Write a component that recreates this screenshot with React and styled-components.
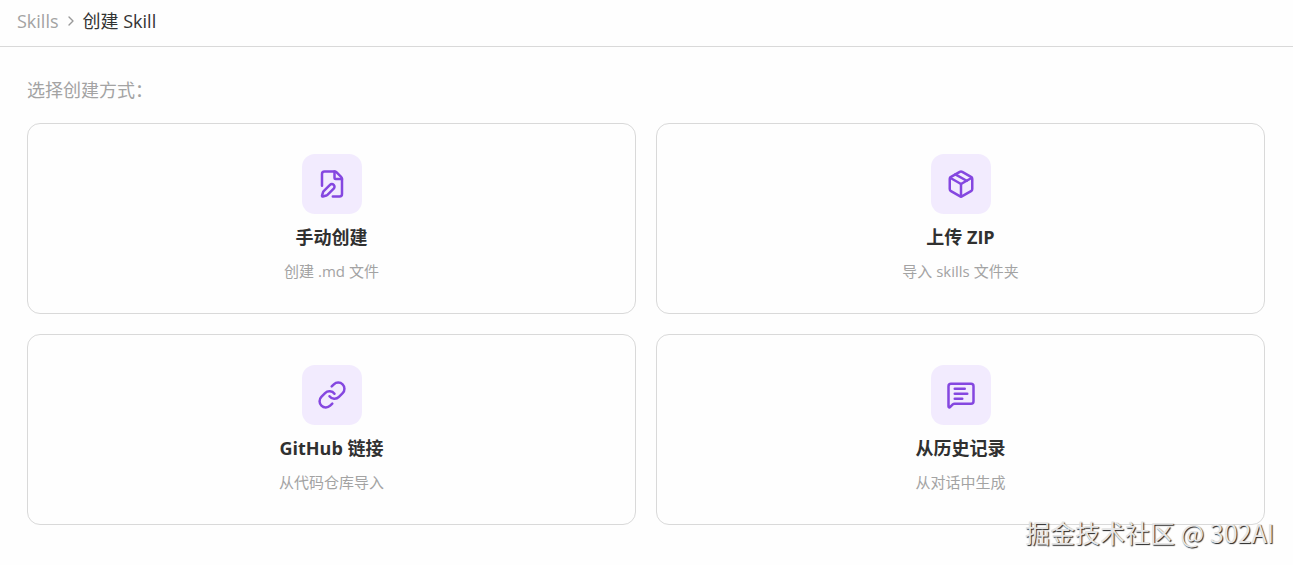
import React from 'react';
import styled, { createGlobalStyle } from 'styled-components';
import { ChevronRight, FilePen, Link, MessageSquareText, Package } from 'lucide-react';

const methods = [
    { id: 'manual', icon: FilePen, title: '手动创建', desc: '创建 .md 文件' },
    { id: 'zip', icon: Package, title: '上传 ZIP', desc: '导入 skills 文件夹' },
    { id: 'github', icon: Link, title: 'GitHub 链接', desc: '从代码仓库导入' },
    { id: 'history', icon: MessageSquareText, title: '从历史记录', desc: '从对话中生成' },
];

const MethodCard = ({ icon: Icon, title, desc }) => (
    <Card type="button">
        <IconBox>
            <Icon size={30} strokeWidth={2} aria-hidden="true" />
        </IconBox>
        <CardTitle>{title}</CardTitle>
        <CardDesc>{desc}</CardDesc>
    </Card>
);

const App = () => {
    return (
        <Page>
            <GlobalStyle />
            <Breadcrumb>
                <CrumbLink href="#">Skills</CrumbLink>
                <ChevronRight size={16} color="#999999" aria-hidden="true" />
                <CrumbCurrent>创建 Skill</CrumbCurrent>
            </Breadcrumb>

            <Content>
                <Prompt>选择创建方式：</Prompt>
                <Grid>
                    {methods.map((item) => (
                        <MethodCard key={item.id} icon={item.icon} title={item.title} desc={item.desc} />
                    ))}
                </Grid>
            </Content>

            <Watermark>掘金技术社区 @ 302AI</Watermark>
        </Page>
    );
};

const GlobalStyle = createGlobalStyle`
  * {
    box-sizing: border-box;
  }

  body {
    margin: 0;
    background-color: #fefefe;
    font-family: "Open Sans", "Noto Sans CJK SC", sans-serif;
  }
`;

const Page = styled.div`
  position: relative;
  min-height: 100vh;
`;

const Breadcrumb = styled.nav`
  display: flex;
  align-items: center;
  gap: 4px;
  height: 47px;
  padding: 0 17px 4px;
  border-bottom: 1px solid #d9d9d9;
  font-size: 18px;
  line-height: 28px;
`;

const CrumbLink = styled.a`
  color: #a3a3a3;
  text-decoration: none;
`;

const CrumbCurrent = styled.span`
  color: #333333;
`;

const Content = styled.main`
  padding: 29px 28px 40px 27px;
`;

const Prompt = styled.p`
  margin: 0 0 19px;
  color: #a3a3a3;
  font-size: 18px;
  line-height: 28px;
`;

const Grid = styled.div`
  display: grid;
  grid-template-columns: repeat(2, 1fr);
  gap: 20px;
`;

const Card = styled.button`
  display: flex;
  flex-direction: column;
  align-items: center;
  padding: 30px;
  border: 1px solid #d9d9d9;
  border-radius: 13px;
  background-color: #fefefe;
  font-family: inherit;
  cursor: pointer;

  &:hover {
    border-color: #8547e0;
  }
`;

const IconBox = styled.span`
  display: flex;
  align-items: center;
  justify-content: center;
  width: 60px;
  height: 60px;
  border-radius: 13px;
  background-color: #f2ebfe;
  color: #8547e0;
`;

const CardTitle = styled.span`
  margin-top: 9px;
  color: #303030;
  font-size: 18px;
  font-weight: 700;
  line-height: 28px;
`;

const CardDesc = styled.span`
  margin-top: 9px;
  color: #a3a3a3;
  font-size: 15px;
  line-height: 23px;
`;

const Watermark = styled.div`
  position: absolute;
  right: 19px;
  bottom: 15px;
  color: #e6e6e6;
  font-family: "Noto Sans CJK SC", sans-serif;
  font-size: 25px;
  line-height: 36px;
  text-shadow: 1px 1px 1px #222222;
  pointer-events: none;
`;

export default App;
